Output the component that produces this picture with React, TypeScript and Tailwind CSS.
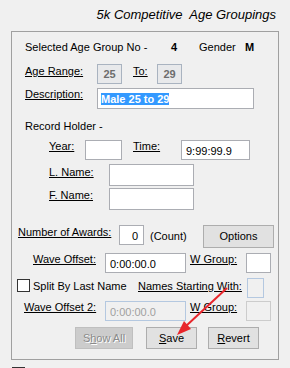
import React from "react";

type BoxProps = { className?: string; children?: React.ReactNode };

// plain white edit box
const Field = ({ className = "", children }: BoxProps) => (
  <div className={`shrink-0 bg-white border border-[#abadb3] ${className}`}>{children}</div>
);

const Label = ({ className = "", children }: BoxProps) => (
  <span className={`shrink-0 underline decoration-1 underline-offset-[1px] ${className}`}>{children}</span>
);

const Button = ({ className = "", children }: BoxProps) => (
  <div
    className={`shrink-0 h-[22px] flex items-center justify-center border border-[#adadad] bg-[#e1e1e1] ${className}`}
  >
    {children}
  </div>
);

export default function App() {
  return (
    <div className="relative w-[290px] h-[368px] overflow-hidden bg-[#f0f0f0] text-black text-[11px] leading-[13px] font-['Liberation_Sans',Arial,sans-serif]">
      <div className="pt-[7px] pr-[14px] text-right italic text-[13px] leading-[16px] whitespace-pre">
        5k Competitive  Age Groupings
      </div>

      <div className="mt-[8px] ml-[11px] w-[268px] h-[329px] border border-[#a0a0a0] flex flex-col">
        {/* selected group */}
        <div className="mt-[8px] h-[14px] flex pl-[13px] leading-[14px]">
          <span className="w-[146px] shrink-0">Selected Age Group No -</span>
          <span className="w-[28px] shrink-0 font-bold">4</span>
          <span className="w-[46px] shrink-0">Gender</span>
          <span className="font-bold">M</span>
        </div>

        {/* age range */}
        <div className="mt-[10px] h-[20px] flex items-start pl-[13px]">
          <Label className="w-[72px] pt-[1px]">Age Range:</Label>
          <div className="shrink-0 w-[25px] h-[20px] flex items-center justify-center border border-[#a9b3c0] bg-[#e8e9eb] font-bold text-[#6d6d6d]">
            25
          </div>
          <Label className="ml-[11px] w-[24px] pt-[1px]">To:</Label>
          <div className="shrink-0 w-[25px] h-[20px] flex items-center justify-center border border-[#a9b3c0] bg-[#e8e9eb] font-bold text-[#6d6d6d]">
            29
          </div>
        </div>

        {/* description */}
        <div className="mt-[4px] h-[21px] flex items-start pl-[13px]">
          <Label className="w-[72px]">Description:</Label>
          <Field className="w-[157px] h-[21px] pt-[4px] pl-[3px]">
            <span className="bg-[#3399ff] text-white font-bold">Male 25 to 29</span>
          </Field>
        </div>

        <div className="mt-[11px] h-[13px] pl-[13px]">Record Holder -</div>

        {/* year / time */}
        <div className="mt-[7px] h-[20px] flex items-start pl-[37px]">
          <Label className="w-[36px]">Year:</Label>
          <Field className="w-[37px] h-[20px]" />
          <Label className="ml-[11px] w-[48px]">Time:</Label>
          <Field className="w-[69px] h-[20px] pt-[4px] pl-[4px]">9:99:99.9</Field>
        </div>

        <div className="mt-[4px] h-[22px] flex items-start pl-[37px]">
          <Label className="w-[60px] pt-[2px]">L. Name:</Label>
          <Field className="w-[85px] h-[22px]" />
        </div>

        <div className="mt-[2px] h-[22px] flex items-start pl-[37px]">
          <Label className="w-[60px] pt-[1px]">F. Name:</Label>
          <Field className="w-[85px] h-[22px]" />
        </div>

        {/* awards */}
        <div className="mt-[15px] h-[23px] flex items-start pl-[6px]">
          <Label className="w-[101px] pt-[1px]">Number of Awards:</Label>
          <Field className="w-[25px] h-[20px] pt-[4px] pr-[5px] text-right">0</Field>
          <span className="ml-[6px] w-[53px] shrink-0 pt-[5px]">(Count)</span>
          <Button className="w-[71px] h-[23px]">Options</Button>
        </div>

        {/* wave offset */}
        <div className="mt-[5px] h-[20px] flex items-start pl-[21px]">
          <Label className="w-[72px]">Wave Offset:</Label>
          <Field className="w-[81px] h-[20px] pt-[4px] pl-[4px]">0:00:00.0</Field>
          <Label className="ml-[4px] w-[56px]">W Group:</Label>
          <Field className="w-[25px] h-[20px]" />
        </div>

        {/* split */}
        <div className="mt-[5px] h-[20px] flex items-start pl-[5px]">
          <div className="shrink-0 mt-[1px] w-[13px] h-[13px] border border-[#333333] bg-white" />
          <span className="ml-[3px] w-[105px] shrink-0 pt-[2px]">Split By Last Name</span>
          <Label className="w-[109px] pt-[2px]">Names Starting With:</Label>
          <div className="shrink-0 w-[17px] h-[20px] border border-[#b4c8e0] bg-[#f0f0f0]" />
        </div>

        {/* wave offset 2 */}
        <div className="mt-[3px] h-[20px] flex items-start pl-[12px]">
          <Label className="w-[81px]">Wave Offset 2:</Label>
          <div className="shrink-0 w-[81px] h-[20px] pt-[4px] pl-[4px] border border-[#b4c8e0] bg-[#f0f0f0] text-[#a0a0a0]">
            0:00:00.0
          </div>
          <Label className="ml-[4px] w-[56px]">W Group:</Label>
          <div className="shrink-0 w-[25px] h-[20px] border border-[#cccccc] bg-[#f0f0f0]" />
        </div>

        {/* buttons */}
        <div className="mt-[6px] h-[22px] flex items-start pl-[63px]">
          <div className="shrink-0 w-[58px] h-[22px] flex items-center justify-center border border-[#bfbfbf] bg-[#cccccc] text-[#8a8a8a] [text-shadow:1px_1px_0_#ffffff]">
            <span>
              S<span className="underline">h</span>ow All
            </span>
          </div>
          <Button className="ml-[13px] w-[51px]">
            <span>
              <span className="underline">S</span>ave
            </span>
          </Button>
          <Button className="ml-[11px] w-[51px]">
            <span>
              <span className="underline">R</span>evert
            </span>
          </Button>
        </div>
      </div>

      <div className="mt-[7px] ml-[12px] w-[13px] h-[13px] border border-[#333333]" />

      {/* red annotation arrow */}
      <svg className="absolute inset-0 pointer-events-none" width="290" height="368" viewBox="0 0 290 368">
        <line x1="227" y1="288" x2="186" y2="326" stroke="#e8262c" strokeWidth="2" />
        <polygon points="177,335 191,329 184,321" fill="#e8262c" />
      </svg>
    </div>
  );
}
